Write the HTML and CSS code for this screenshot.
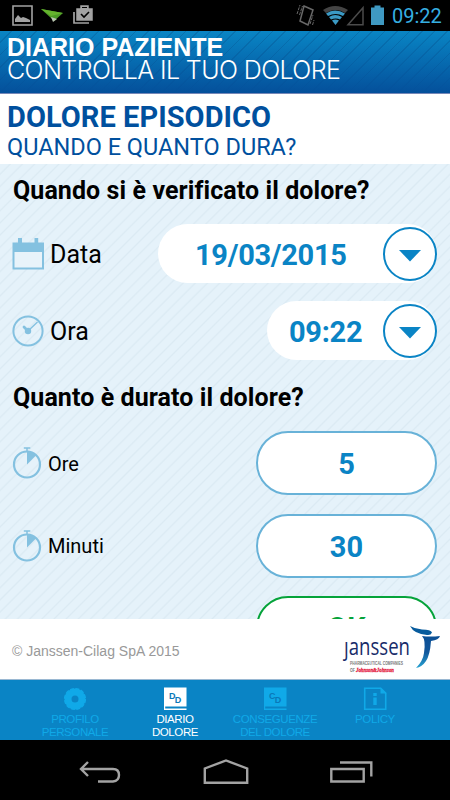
FILE: index.html
```
<!DOCTYPE html>
<html lang="it">
<head>
  <meta charset="UTF-8" />
  <meta name="viewport" content="width=device-width, initial-scale=1.0"/>
  <title>Diario Paziente</title>
  <link rel="stylesheet" href="styles.css">
</head>
<body>
  <div class="statusbar">
    <svg class="status-left" width="100" height="31" viewBox="0 0 100 31">
      <path d="M13 6h19v19h-19z" fill="none" stroke="#a3a3a3" stroke-width="1.6"/>
      <path d="M15 22v-3l3-4 3 3 2-1 3 1 4 2v2z" fill="#a3a3a3"/>
      <path d="M41 9l22 4-9 8-3-3z" fill="#4c9a26"/>
      <path d="M41 9l22 4-12 3z" fill="#65b32e"/>
      <path d="M51 17l3 1 3 1-4 3z" fill="#b9c4b1"/>
      <path d="M77 9h15v11h-15zM81 9v-3h7v3" fill="#a3a3a3" stroke="#a3a3a3" stroke-width="1.5"/>
      <path d="M82 8v-1h5v1z" fill="#000"/>
      <path d="M81 14l3 3 5-5" fill="none" stroke="#000" stroke-width="1.6"/>
      <path d="M74 12v11h15" fill="none" stroke="#a3a3a3" stroke-width="1.7"/>
    </svg>
    <div class="status-right">
      <svg width="90" height="31" viewBox="295 0 90 31">
        <path d="M304 6l9 4-5 15-8-4z" fill="none" stroke="#686868" stroke-width="1.5"/>
        <path d="M297 14l3-9M299.500 15l3-9M310 24l3-9M312.500 25l1.500-5" stroke="#686868" stroke-width="1" stroke-dasharray="3 1"/>
        <path d="M323 10q12-8 25 0l-3 3q-9-6-19 0z" fill="#444"/>
        <path d="M326 13.500q9-6 19 0l-2 2.500q-7-4-15 0zM329 17q6-4 13 0l-2 2.500q-4-2-9 0zM332 20.500q3-2 7 0l-3.500 4.500z" fill="#3b9ac5"/>
        <path d="M348 24.800h15v-17z" fill="none" stroke="#4b4b4b" stroke-width="1.500"/>
        <path d="M371 7.500h3.500v-2h6v2h3.500v17.500h-13z" fill="#3f99c2"/>
      </svg>
      <span class="clock">09:22</span>
    </div>
  </div>

  <div class="header">
    <div class="app-name">DIARIO PAZIENTE</div>
    <div class="app-sub">CONTROLLA IL TUO DOLORE</div>
  </div>

  <div class="title">
    <h1>DOLORE EPISODICO</h1>
    <h2>QUANDO E QUANTO DURA?</h2>
  </div>

  <div class="container">
    <div class="question">Quando si è verificato il dolore?</div>
    <div class="row date-row">
      <svg width="32" height="32" viewBox="0 0 32 32">
        <path d="M0.500 4.500h31.500v27h-31.500z" fill="#84c1e0"/>
        <path d="M6 0h4v6h-4zM22.500 0h3.700v6h-3.700z" fill="#84c1e0"/>
        <path d="M2.500 14h27.500v15.500h-27.500z" fill="#e8f3fa"/>
      </svg>
      <label class="label">Data</label>
      <div class="picker date-picker">
        <span>19/03/2015</span>
        <button class="drop"><svg width="22" height="12" viewBox="0 0 22 12"><path d="M0 0h22l-11 11.500z" fill="#0a84c5"/></svg></button>
      </div>
    </div>
    <div class="row time-row">
      <svg width="32" height="32" viewBox="0 0 32 32">
        <circle cx="16" cy="16" r="14.600" fill="none" stroke="#84c1e0" stroke-width="2"/>
        <circle cx="16" cy="16" r="3.200" fill="#84c1e0"/>
        <path d="M16 16l-4-4" stroke="#84c1e0" stroke-width="2.800" stroke-linecap="round"/>
        <path d="M16 16l9.500-9" stroke="#84c1e0" stroke-width="1.400"/>
      </svg>
      <label class="label">Ora</label>
      <div class="picker time-picker">
        <span>09:22</span>
        <button class="drop"><svg width="22" height="12" viewBox="0 0 22 12"><path d="M0 0h22l-11 11.500z" fill="#0a84c5"/></svg></button>
      </div>
    </div>

    <div class="question second">Quanto è durato il dolore?</div>
    <div class="row duration">
      <svg width="30" height="32" viewBox="0 0 30 32">
        <circle cx="15" cy="17.500" r="13" fill="none" stroke="#84c1e0" stroke-width="2.200"/>
        <path d="M11.800 1h6.500M15 1v4" stroke="#84c1e0" stroke-width="1.500"/>
        <path d="M15 17.500v-13q5.500 0 9.200 3.800z" fill="#84c1e0"/>
      </svg>
      <label class="label small">Ore</label>
      <div class="number">5</div>
    </div>
    <div class="row duration">
      <svg width="30" height="32" viewBox="0 0 30 32">
        <circle cx="15" cy="17.500" r="13" fill="none" stroke="#84c1e0" stroke-width="2.200"/>
        <path d="M11.800 1h6.500M15 1v4" stroke="#84c1e0" stroke-width="1.500"/>
        <path d="M15 17.500v-13q5.500 0 9.200 3.800z" fill="#84c1e0"/>
      </svg>
      <label class="label small">Minuti</label>
      <div class="number">30</div>
    </div>
    <div class="row">
      <button class="number ok-btn">OK</button>
    </div>
  </div>

  <div class="footer">
    <span class="copy">© Janssen-Cilag SpA 2015</span>
    <svg class="brand" width="100" height="50" viewBox="342 624 100 50">
      <defs>
        <linearGradient id="figure" x1="0" y1="0" x2="0" y2="1">
          <stop offset="0" stop-color="#0b4f95"/>
          <stop offset=".5" stop-color="#11569b"/>
          <stop offset="1" stop-color="#28a3d2"/>
        </linearGradient>
      </defs>
      <text class="brand-name" x="344" y="655" textLength="66" lengthAdjust="spacingAndGlyphs">ȷanssen</text>
      <text class="brand-small" x="350" y="665" textLength="53" lengthAdjust="spacingAndGlyphs">PHARMACEUTICAL COMPANIES</text>
      <text class="brand-small" x="350" y="671.500" textLength="5" lengthAdjust="spacingAndGlyphs">OF</text>
      <text class="brand-jj" x="356" y="672" textLength="38" lengthAdjust="spacingAndGlyphs">Johnson&amp;Johnson</text>
      <path d="M410 626q5 3 12 3.500 9 0 10 3-1 3-5 2.500-13-1-17-9z" fill="#075b9d"/>
      <path d="M422 636q8 1 18 0-1 4-9 5-1 14-5 20-4 6-10 7 7-7 8-15 2-13-2-17z" fill="url(#figure)"/>
    </svg>
  </div>

  <div class="navbar">
    <a class="tab">
      <svg width="24" height="24" viewBox="0 0 24 24">
        <circle cx="12" cy="12" r="7" fill="none" stroke="#10a9e8" stroke-width="7"/>
        <circle cx="12" cy="12" r="10.300" fill="none" stroke="#10a9e8" stroke-width="1.600" stroke-dasharray="3.900 1.500"/>
      </svg>
      <span>PROFILO</span><span>PERSONALE</span>
    </a>
    <a class="tab active">
      <svg width="24" height="24" viewBox="0 0 24 24">
        <path d="M1 0.500h22.500v19h-22.500zM1 21.500h22.500v1.500h-22.500zM1 19h1.200v4h-1.200z" fill="#fff"/>
        <text class="icon-letter" x="6" y="12">D</text>
        <text class="icon-letter" x="11.700" y="15.500">D</text>
      </svg>
      <span>DIARIO</span><span>DOLORE</span>
    </a>
    <a class="tab">
      <svg width="24" height="24" viewBox="0 0 24 24">
        <path d="M1 0.500h22.500v19h-22.500zM1 21.500h22.500v1.500h-22.500zM1 19h1.200v4h-1.200z" fill="#10a9e8"/>
        <text class="icon-letter" x="6" y="12">C</text>
        <text class="icon-letter" x="11.700" y="15.500">D</text>
      </svg>
      <span>CONSEGUENZE</span><span>DEL DOLORE</span>
    </a>
    <a class="tab">
      <svg width="24" height="24" viewBox="0 0 24 24">
        <path d="M1.700 1.200h16l5 5v16h-21z" fill="none" stroke="#10a9e8" stroke-width="1.600"/>
        <path d="M17.500.500l6 6h-6z" fill="#10a9e8"/>
        <path d="M10.300 6h3.400v3h-3.400zM10.300 10.500h3.400v7.500h-3.400z" fill="#10a9e8"/>
      </svg>
      <span>POLICY</span>
    </a>
  </div>

  <div class="softkeys">
    <svg width="44" height="24" viewBox="78 760 44 24"><path d="M88 762l-7 7 7 7M81 769h32q6 0 6 6t-6 6.500h-15" fill="none" stroke="#a3a3a3" stroke-width="2.400"/></svg>
    <svg width="48" height="28" viewBox="201 757 48 28"><path d="M203.800 781.700v-14.200l21.200-8 21.200 8v14.200z" fill="none" stroke="#a3a3a3" stroke-width="2.400"/></svg>
    <svg width="44" height="24" viewBox="329 760 44 24"><path d="M331.300 769h32.400v12.500h-32.400zM340 762.500h31.300v14" fill="none" stroke="#a3a3a3" stroke-width="2.400"/></svg>
  </div>
</body>
</html>
```
FILE: styles.css
```
body {
  margin: 0;
  width: 450px;
  height: 800px;
  overflow: hidden;
  display: flex;
  flex-direction: column;
  font-family: Roboto, sans-serif;
  background: #fff;
}
.statusbar {
  height: 31px;
  flex-shrink: 0;
  background: #000;
  display: flex;
  justify-content: space-between;
}
.status-right {
  display: flex;
  width: 155px;
}
.clock {
  color: #36afe2;
  font-size: 20px;
  line-height: 32px;
  margin-left: 7px;
}
.header {
  height: 63px;
  flex-shrink: 0;
  box-sizing: border-box;
  padding: 5px 0 0 7px;
  color: #fff;
  background: linear-gradient(rgba(4,80,155,0), #04509b), repeating-linear-gradient(135deg, #0985c4 0 7.600px, #0873b0 7.800px 8.800px);
  border-bottom: 1px solid #7688b8;
  white-space: nowrap;
}
.app-name {
  font: bold 25px/23px "Liberation Sans", sans-serif;
}
.app-sub {
  font: 300 25px/22px Inter, "Liberation Sans", sans-serif;
  letter-spacing: -0.600px;
}
.title {
  height: 70px;
  flex-shrink: 0;
  box-sizing: border-box;
  padding: 8px 0 0 7px;
  color: #00509e;
}
.title h1 {
  margin: 0;
  font-size: 29px;
  line-height: 31px;
  font-weight: 700;
  letter-spacing: 0.050px;
}
.title h2 {
  margin: 0;
  font-size: 23.500px;
  line-height: 29px;
  font-weight: 400;
}
.container {
  height: 455px;
  flex-shrink: 0;
  overflow: hidden;
  box-sizing: border-box;
  padding: 0 13px 0 12px;
  background: repeating-linear-gradient(135deg, #e5f2fa 0 6px, #dbeaf3 7.300px, #e5f2fa 8.600px);
}
.question {
  height: 60px;
  line-height: 53px;
  padding-left: 1px;
  font-size: 25px;
  font-weight: 700;
  letter-spacing: 0.080px;
  color: #000;
  white-space: nowrap;
}
.second {
  height: 65px;
  line-height: 63px;
  margin-top: 6px;
}
.row {
  display: flex;
  align-items: center;
}
.date-row, .time-row {
  height: 59px;
}
.time-row {
  margin-top: 18px;
}
.label {
  font-size: 25px;
  margin-left: 6px;
  padding-top: 2px;
  color: #000;
}
.small {
  font-size: 20px;
  padding-top: 1px;
}
.picker {
  margin-left: auto;
  height: 59px;
  border-radius: 30px;
  background: #fff;
  display: flex;
  align-items: center;
  justify-content: space-between;
  box-sizing: border-box;
  color: #0a84c5;
  font-size: 29px;
  font-weight: 700;
  letter-spacing: -0.300px;
}
.picker span {
  padding-top: 3px;
}
.date-picker {
  width: 279px;
  padding-left: 37px;
}
.time-picker {
  width: 170px;
  padding-left: 22px;
}
.drop {
  width: 54px;
  height: 54px;
  box-sizing: border-box;
  border: 2px solid #0a84c5;
  border-radius: 50%;
  background: #fff;
  padding: 4px 0 0;
  display: flex;
  align-items: center;
  justify-content: center;
}
.number {
  margin-left: auto;
  width: 181px;
  height: 64px;
  box-sizing: border-box;
  border: 2px solid #68b2d8;
  border-radius: 32px;
  background: #fff;
  color: #0a84c5;
  font: 700 29px/63px Roboto, sans-serif;
  text-align: center;
}
.duration {
  height: 64px;
  margin-bottom: 18.500px;
}
.ok-btn {
  border-color: #05a33a;
  color: #05a33a;
  padding: 0;
  line-height: 58px;
}
.footer {
  height: 61px;
  flex-shrink: 0;
  box-sizing: border-box;
  background: #fff;
  border-bottom: 1px solid #9ab8d2;
  display: flex;
  align-items: center;
  justify-content: space-between;
  padding: 0 8px 0 12px;
}
.copy {
  color: #999;
  font: 14px "Liberation Sans", sans-serif;
  padding-top: 3px;
}
.brand {
  overflow: visible;
}
.brand-name {
  font: 24px "Open Sans", sans-serif;
  fill: #172b69;
}
.brand-small {
  font: bold 4.500px "Liberation Sans", sans-serif;
  fill: #777;
}
.brand-jj {
  font: italic bold 7px "Liberation Serif", serif;
  fill: #e4173c;
  stroke: #e4173c;
  stroke-width: 0.300px;
}
.navbar {
  height: 60px;
  flex-shrink: 0;
  box-sizing: border-box;
  background: #0a84c5;
  display: grid;
  grid-template-columns: repeat(4, 100px);
  padding: 7px 25px 0;
}
.tab {
  display: flex;
  flex-direction: column;
  align-items: center;
  color: #10a9e8;
  font: 11.500px/12.500px "Liberation Sans", sans-serif;
  letter-spacing: -0.400px;
}
.tab svg {
  margin-bottom: 2px;
}
.active {
  color: #fff;
}
.icon-letter {
  font: bold 9px "Liberation Sans", sans-serif;
  letter-spacing: 0;
  fill: #0a78b8;
}
.softkeys {
  height: 60px;
  flex-shrink: 0;
  background: #000;
  display: flex;
  align-items: center;
  justify-content: space-between;
  padding: 3px 77px 0 78px;
  box-sizing: border-box;
}
```
